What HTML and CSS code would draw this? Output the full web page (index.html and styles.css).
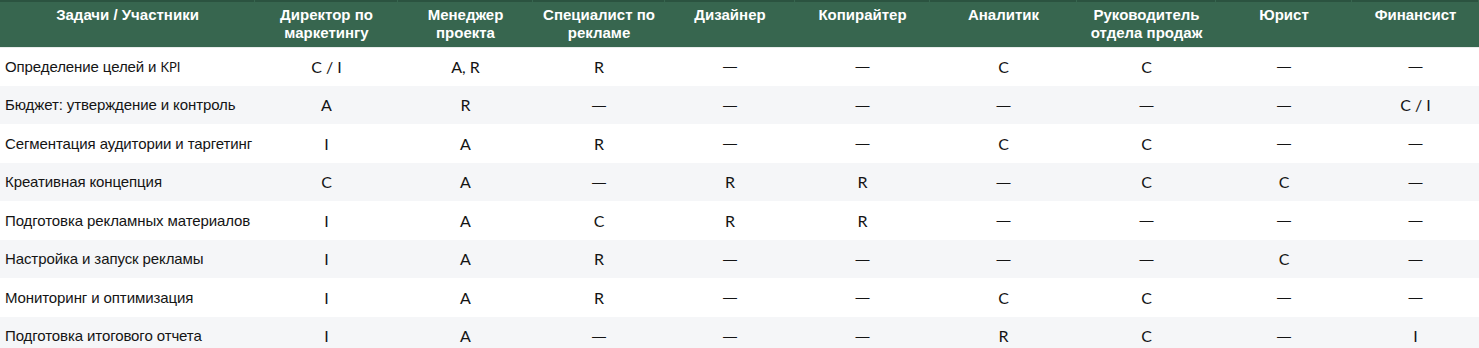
FILE: index.html
```html
<!DOCTYPE html>
<html lang="ru">
<head>
<meta charset="utf-8">
<title>RACI</title>
<link rel="stylesheet" href="styles.css">
</head>
<body>
<table class="raci">
  <colgroup>
    <col class="c0"><col class="c1"><col class="c2"><col class="c3"><col class="c4"><col class="c5"><col class="c6"><col class="c7"><col class="c8"><col class="c9">
  </colgroup>
  <thead>
    <tr>
      <th>Задачи / Участники</th>
      <th>Директор по<br>маркетингу</th>
      <th>Менеджер<br>проекта</th>
      <th>Специалист по<br>рекламе</th>
      <th>Дизайнер</th>
      <th>Копирайтер</th>
      <th>Аналитик</th>
      <th>Руководитель<br>отдела продаж</th>
      <th>Юрист</th>
      <th>Финансист</th>
    </tr>
  </thead>
  <tbody>
    <tr><td class="task">Определение целей и <span class="abbr">KPI</span></td><td>C / I</td><td>A, R</td><td>R</td><td class="na">—</td><td class="na">—</td><td>C</td><td>C</td><td class="na">—</td><td class="na">—</td></tr>
    <tr><td class="task">Бюджет: утверждение и контроль</td><td>A</td><td>R</td><td class="na">—</td><td class="na">—</td><td class="na">—</td><td class="na">—</td><td class="na">—</td><td class="na">—</td><td>C / I</td></tr>
    <tr><td class="task">Сегментация аудитории и таргетинг</td><td>I</td><td>A</td><td>R</td><td class="na">—</td><td class="na">—</td><td>C</td><td>C</td><td class="na">—</td><td class="na">—</td></tr>
    <tr><td class="task">Креативная концепция</td><td>C</td><td>A</td><td class="na">—</td><td>R</td><td>R</td><td class="na">—</td><td>C</td><td>C</td><td class="na">—</td></tr>
    <tr><td class="task">Подготовка рекламных материалов</td><td>I</td><td>A</td><td>C</td><td>R</td><td>R</td><td class="na">—</td><td class="na">—</td><td class="na">—</td><td class="na">—</td></tr>
    <tr><td class="task">Настройка и запуск рекламы</td><td>I</td><td>A</td><td>R</td><td class="na">—</td><td class="na">—</td><td class="na">—</td><td class="na">—</td><td>C</td><td class="na">—</td></tr>
    <tr><td class="task">Мониторинг и оптимизация</td><td>I</td><td>A</td><td>R</td><td class="na">—</td><td class="na">—</td><td>C</td><td>C</td><td class="na">—</td><td class="na">—</td></tr>
    <tr><td class="task">Подготовка итогового отчета</td><td>I</td><td>A</td><td class="na">—</td><td class="na">—</td><td class="na">—</td><td>R</td><td>C</td><td class="na">—</td><td>I</td></tr>
  </tbody>
</table>
</body>
</html>
```
FILE: styles.css
```css
html, body {
  margin: 0;
  padding: 0;
  background: #ffffff;
}
.raci {
  width: 1479px;
  border-collapse: separate;
  border-spacing: 0;
  table-layout: fixed;
  font-family: "Liberation Sans", Arial, sans-serif;
  color: #141414;
}
.c0 { width: 255px; }
.c1 { width: 143px; }
.c2 { width: 135px; }
.c3 { width: 132px; }
.c4 { width: 130px; }
.c5 { width: 135px; }
.c6 { width: 147px; }
.c7 { width: 139px; }
.c8 { width: 136px; }
.c9 { width: 127px; }

.raci th {
  height: 47px;
  box-sizing: border-box;
  padding: 6px 2px 0;
  vertical-align: top;
  text-align: center;
  font-size: 15px;
  line-height: 18px;
  font-weight: bold;
  color: #ffffff;
  background:
    linear-gradient(#2b5340, #2b5340) left top / calc(100% - 1px) 2px no-repeat,
    #37664f;
}
.raci td {
  height: 38.5px;
  padding: 0 4px;
  text-align: center;
  vertical-align: middle;
  font-family: Lato, "Liberation Sans", sans-serif;
  font-size: 16px;
}
.raci td.na {
  font-family: "Liberation Sans", Arial, sans-serif;
  font-size: 14px;
}
.raci tbody tr:nth-child(even) td {
  background: #f5f6f8;
}
.raci tbody tr:first-child td {
  box-shadow: inset 0 1px 0 #e9edeb;
}
.raci td.task {
  text-align: left;
  padding: 0 0 0 5px;
  white-space: nowrap;
  overflow: hidden;
  font-family: "Liberation Sans", Arial, sans-serif;
  font-size: 15px;
  letter-spacing: -0.1px;
}
.abbr {
  font-family: Lato, "Liberation Sans", sans-serif;
  font-size: 13px;
}
```
